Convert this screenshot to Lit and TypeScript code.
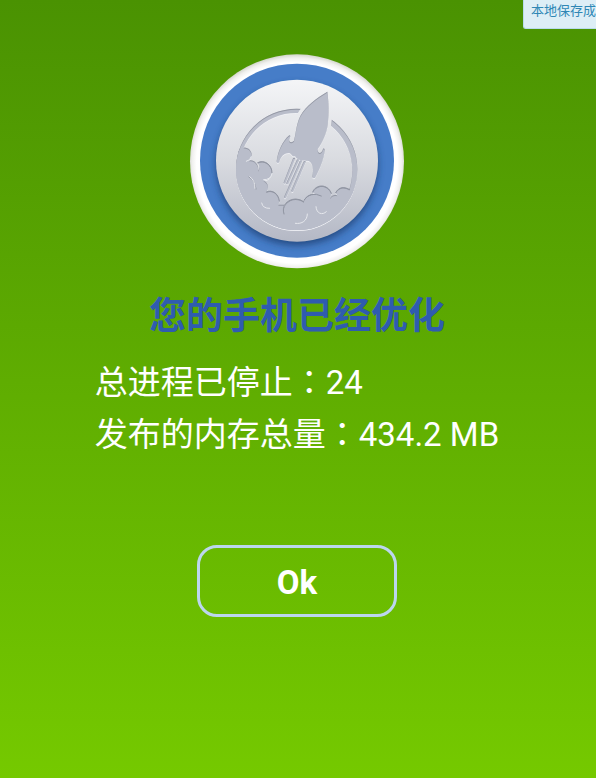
import { LitElement, html, css } from "lit";
import { customElement } from "lit/decorators.js";

@customElement("rocket-badge")
class RocketBadge extends LitElement {
  static styles = css`
    :host { display: block; }
    svg { display: block; width: 216px; height: 216px; }
  `;

  render() {
    return html`
      <svg viewBox="27 25 648 648" role="img" aria-label="火箭">
        <defs>
          <radialGradient id="rim" gradientUnits="userSpaceOnUse" cx="351" cy="354" r="324">
            <stop offset="0.93" stop-color="#ffffff" />
            <stop offset="0.97" stop-color="#f0f0ee" />
            <stop offset="1" stop-color="#d5d8ce" />
          </radialGradient>
          <linearGradient id="disc" x1="0" y1="0" x2="0" y2="1">
            <stop offset="0" stop-color="#f4f5f7" />
            <stop offset="0.5" stop-color="#d9dbe0" />
            <stop offset="1" stop-color="#b4b8c5" />
          </linearGradient>
          <filter id="drop" x="-20%" y="-20%" width="140%" height="140%">
            <feGaussianBlur stdDeviation="11" />
          </filter>
          <filter id="engrave" x="-10%" y="-10%" width="120%" height="120%" color-interpolation-filters="sRGB">
            <feOffset in="SourceAlpha" dx="1" dy="4" result="down" />
            <feComposite in="SourceAlpha" in2="down" operator="out" result="edge" />
            <feFlood flood-color="#8b8f9b" flood-opacity="0.8" />
            <feComposite in2="edge" operator="in" result="dark" />
            <feGaussianBlur in="dark" stdDeviation="1" result="darkSoft" />
            <feComposite in="down" in2="SourceAlpha" operator="out" result="lip" />
            <feFlood flood-color="#eff0f4" flood-opacity="0.9" />
            <feComposite in2="lip" operator="in" result="light" />
            <feGaussianBlur in="light" stdDeviation="1" result="lightSoft" />
            <feMerge>
              <feMergeNode in="lightSoft" />
              <feMergeNode in="SourceGraphic" />
              <feMergeNode in="darkSoft" />
            </feMerge>
          </filter>
          <path id="rocket" d="M442 141C446 170 447 210 443 240C439 268 428 292 413 313C412 329 425 329 429 313C431 310 434 312 434 317C431 346 417 379 405 399C402 402 397 400 397 396C402 375 398 356 388 350C382 347 378 350 375 347C362 349 351 344 345 334C337 338 336 328 328 325C310 324 302 338 297 353C294 357 290 354 290 350C293 322 307 289 328 272C332 272 331 276 329 281C324 292 332 297 342 288C348 268 348 241 361 214C378 182 410 161 442 141Z" />
          <mask id="gap" maskUnits="userSpaceOnUse" x="100" y="100" width="500" height="500">
            <rect x="100" y="100" width="500" height="500" fill="#fff" />
            <use href="#rocket" fill="#000" stroke="#000" stroke-width="22" />
          </mask>
          <clipPath id="well"><circle cx="350" cy="374" r="182" /></clipPath>
        </defs>

        <circle cx="351" cy="350" r="321" fill="url(#rim)" />
        <circle cx="351" cy="348" r="291" fill="#467dc8" />
        <circle cx="351" cy="360" r="243" fill="#1c3c70" opacity="0.75" filter="url(#drop)" />
        <circle cx="351" cy="348" r="243" fill="url(#disc)" />

        <g filter="url(#engrave)" fill="#b9bdca">
          <path mask="url(#gap)" fill-rule="evenodd"
            d="M168 374A182 182 0 1 1 532 374A182 182 0 1 1 168 374ZM177 378A170 173 0 1 0 517 378A170 173 0 1 0 177 378Z" />
          <path clip-path="url(#well)"
            d="M150 320L190 309C205 307 217 321 215 334C213 344 207 349 199 350C214 342 230 351 234 366L235 378C240 368 238 362 233 354C254 343 276 361 276 384C274 397 265 407 250 407C263 413 268 427 259 442C276 433 296 447 298 469L295 480L313 480C309 490 309 499 312 507C307 484 322 464 347 463C356 463 364 466 371 471C376 452 397 440 423 454C427 457 425 460 421 457L398 443C407 418 443 416 454 446L450 461C456 451 463 449 472 452L467 444C477 426 493 425 509 435L550 440V600H150Z" />
          <use href="#rocket" />
          <path d="M342 342L314 414M354 346L322 416M363 349L315 458M374 351L337 439" fill="none" stroke="#b9bdca" stroke-width="6" stroke-linecap="round" />
        </g>

        <g fill="none" stroke-linecap="round" stroke-width="3">
          <g stroke="#9095a2">
            <path d="M207 397Q225 405 228 433" />
            <path d="M312 508C303 482 323 464 347 463Q360 463 371 471" />
            <path d="M398 442C407 418 443 416 454 446" />
            <path d="M372 466Q392 438 424 454" />
            <path d="M467 444C477 426 493 425 509 435" />
            <path d="M233 354C254 343 276 361 276 384" />
            <path d="M259 442C276 433 296 447 298 469" />
          </g>
          <g stroke="#e6e8ed">
            <path d="M209 396Q226 407 225 431" />
            <path d="M245 475Q248 492 269 491" />
            <path d="M382 508C382 528 366 539 346 536" />
            <path d="M408 486C409 507 427 513 439 501" />
            <path d="M276 387Q272 406 251 405" />
            <path d="M214 336Q211 348 199 350" />
          </g>
        </g>
      </svg>
    `;
  }
}

@customElement("app-root")
class AppRoot extends LitElement {
  static styles = css`
    :host {
      display: block;
      position: relative;
      box-sizing: border-box;
      min-height: 100vh;
      overflow: hidden;
      background: linear-gradient(#4a9202, #75c900);
      color: #fff;
      font-family: Roboto, "Noto Sans CJK SC", sans-serif;
    }
    .toast {
      position: absolute;
      top: 0;
      right: 0;
      padding: 1px 0 7px 7px;
      border-radius: 0 0 0 3px;
      border-left: 1px solid #b9dcec;
      border-bottom: 1px solid #b9dcec;
      background: #ddeef6;
      color: #2f87b5;
      font-size: 13px;
      line-height: 20px;
      white-space: nowrap;
    }
    main {
      display: flex;
      flex-direction: column;
      align-items: center;
      padding: 53px 2px 40px 0;
    }
    h1 {
      margin: 22px 0 0;
      color: #2f5caf;
      font-size: 37px;
      line-height: 52px;
      font-weight: 700;
    }
    .stats {
      margin: 14px 0 0;
      font-size: 33px;
      line-height: 52px;
    }
    .stats p { margin: 0; }
    .colon {
      font-family: "Noto Sans CJK TC", sans-serif;
      line-height: 1;
    }
    button {
      box-sizing: border-box;
      width: 200px;
      height: 72px;
      margin-top: 84px;
      padding: 2px 0 0;
      border: 3px solid #bcd6ee;
      border-radius: 20px;
      background: transparent;
      color: #fff;
      font: 700 33px Roboto, sans-serif;
    }
  `;

  render() {
    return html`
      <main>
        <rocket-badge></rocket-badge>
        <h1>您的手机已经优化</h1>
        <div class="stats">
          <p>总进程已停止<span class="colon" lang="zh-TW">：</span>24</p>
          <p>发布的内存总量<span class="colon" lang="zh-TW">：</span>434.2 MB</p>
        </div>
        <button type="button">Ok</button>
      </main>
      <div class="toast" role="status">本地保存成</div>
    `;
  }
}
